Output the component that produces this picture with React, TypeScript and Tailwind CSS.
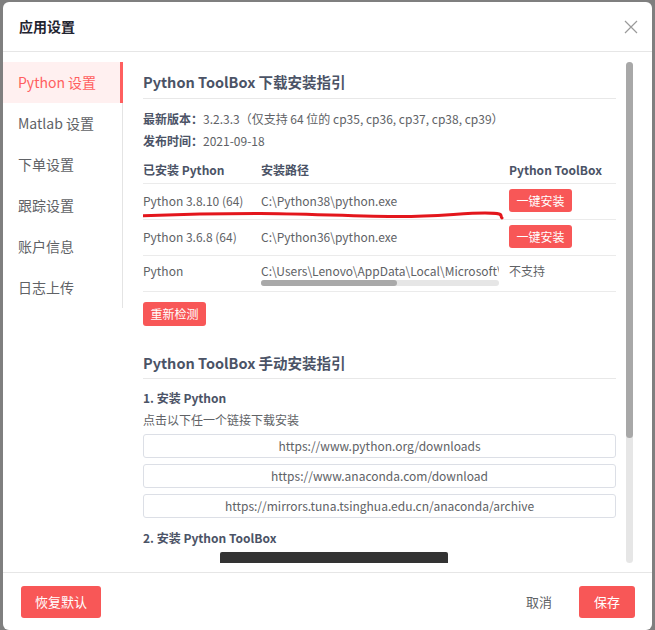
import React from 'react';

const menuItems = ['Python 设置', 'Matlab 设置', '下单设置', '跟踪设置', '账户信息', '日志上传'];

const links = [
  'https://www.python.org/downloads',
  'https://www.anaconda.com/download',
  'https://mirrors.tuna.tsinghua.edu.cn/anaconda/archive',
];

const RedButton: React.FC<{ children: React.ReactNode; className?: string }> = ({ children, className = '' }) => (
  <button className={`block rounded-[3px] bg-[#f85757] text-white ${className}`}>{children}</button>
);

const App: React.FC = () => {
  return (
    <div className="h-[630px] w-full overflow-hidden bg-[#7f7f7f] px-[3px] pt-[2px] font-['Noto_Sans_CJK_SC',sans-serif]">
      <div className="flex h-[628px] flex-col overflow-hidden rounded-[6px] bg-white">
        {/* header */}
        <div className="flex h-[50px] shrink-0 items-center justify-between border-b border-[#e6e6e6] pl-[16px] pr-[14px]">
          <span className="text-[14px] font-bold text-[#1f2430]">应用设置</span>
          <svg width="14" height="14" viewBox="0 0 14 14" stroke="#9a9a9a" strokeWidth="1.2" fill="none">
            <path d="M1 1l12 12M13 1L1 13" />
          </svg>
        </div>

        {/* body */}
        <div className="flex h-[520px] shrink-0 pt-[10px]">
          <div className="w-[120px] shrink-0">
            <div className="border-r border-[#e4e4e4]">
              {menuItems.map((item, i) => (
                <div
                  key={item}
                  className={`relative flex h-[41px] items-center pl-[15px] text-[14px] ${
                    i === 0 ? 'bg-[#fff0f0] text-[#ff5f5f]' : 'text-[#606266]'
                  }`}
                >
                  {item}
                  {i === 0 && <span className="absolute right-[-1px] top-0 h-full w-[3px] bg-[#ff5f5f]" />}
                </div>
              ))}
            </div>
          </div>

          <div className="flex h-[501px] pl-[20px]">
            <div className="h-[501px] w-[473px] overflow-hidden text-[12px] text-[#606266]">
              {/* download guide */}
              <div className="border-b border-[#e8e8e8] pb-[4px] pt-[8px] text-[14.5px] font-bold leading-[24px] text-[#4b5366]">
                Python ToolBox 下载安装指引
              </div>
              <div className="mt-[9px] leading-[22px]">
                <span className="font-bold text-[#4b5366]">最新版本：</span>3.2.3.3（仅支持 64 位的 cp35, cp36, cp37, cp38, cp39）
              </div>
              <div className="leading-[22px]">
                <span className="font-bold text-[#4b5366]">发布时间：</span>2021-09-18
              </div>

              <div className="relative mt-[5px]">
                <div className="flex h-[27px] items-center border-b border-[#ebebeb] font-bold text-[#4b5366]">
                  <div className="w-[118px]">已安装 Python</div>
                  <div className="w-[248px]">安装路径</div>
                  <div>Python ToolBox</div>
                </div>
                <div className="flex h-[36px] items-center border-b border-[#ebebeb] pb-[2px]">
                  <div className="w-[118px]">Python 3.8.10 (64)</div>
                  <div className="w-[248px]">C:\Python38\python.exe</div>
                  <RedButton className="h-[23px] w-[63px] text-[12px]">一键安装</RedButton>
                </div>
                <div className="flex h-[36px] items-center border-b border-[#ebebeb] pb-[2px]">
                  <div className="w-[118px]">Python 3.6.8 (64)</div>
                  <div className="w-[248px]">C:\Python36\python.exe</div>
                  <RedButton className="h-[23px] w-[63px] text-[12px]">一键安装</RedButton>
                </div>
                <div className="flex h-[36px] items-start border-b border-[#ebebeb] pt-[6px]">
                  <div className="w-[118px] leading-[18px]">Python</div>
                  <div className="w-[248px] overflow-hidden">
                    <div className="w-[238px] overflow-hidden whitespace-nowrap leading-[18px]">
                      C:\Users\Lenovo\AppData\Local\Microsoft\WindowsApps\python.exe
                    </div>
                    <div className="h-[6px] w-[238px] rounded-full bg-[#e6e6e6]">
                      <div className="h-[6px] w-[136px] rounded-full bg-[#a9a9a9]" />
                    </div>
                  </div>
                  <div className="leading-[18px]">不支持</div>
                </div>

                <svg className="pointer-events-none absolute left-[-10px] top-[52px]" width="380" height="14" viewBox="0 0 380 14" fill="none">
                  <path
                    d="M2 7 C40 5.5 90 4.5 127 4.5 S230 7.5 267 7.5 S330 4 352 4 S366 7 369 9"
                    stroke="#e3161c"
                    strokeWidth="3"
                    strokeLinecap="round"
                  />
                </svg>
              </div>

              <RedButton className="mt-[10px] h-[24px] w-[63px] text-[12px]">重新检测</RedButton>

              {/* manual guide */}
              <div className="mt-[25px] border-b border-[#e8e8e8] pb-[3px] text-[14.5px] font-bold leading-[24px] text-[#4b5366]">
                Python ToolBox 手动安装指引
              </div>
              <div className="mt-[8px] font-bold leading-[22px] text-[#4b5366]">1. 安装 Python</div>
              <div className="leading-[22px]">点击以下任一个链接下载安装</div>
              <div className="mt-[3px] flex flex-col gap-[6px]">
                {links.map((l) => (
                  <div key={l} className="flex h-[24px] items-center justify-center rounded-[3px] border border-[#dcdfe6]">
                    {l}
                  </div>
                ))}
              </div>
              <div className="mt-[9px] font-bold leading-[22px] text-[#4b5366]">2. 安装 Python ToolBox</div>
              <div className="ml-[77px] mt-[3px] h-[20px] w-[228px] rounded-[2px] bg-[#333333]" />
            </div>

            {/* scrollbar */}
            <div className="ml-[10px] flex h-[501px] w-[7px] flex-col rounded-full bg-[#e6e6e6]">
              <div className="h-[376px] w-[7px] rounded-full bg-[#a8a8a8]" />
            </div>
          </div>
        </div>

        {/* footer */}
        <div className="flex flex-1 items-center border-t border-[#e6e6e6] pl-[18px] pr-[17px]">
          <RedButton className="h-[32px] w-[80px] text-[13px]">恢复默认</RedButton>
          <div className="flex-1" />
          <span className="mr-[27px] text-[13px] text-[#606266]">取消</span>
          <RedButton className="h-[32px] w-[56px] text-[13px]">保存</RedButton>
        </div>
      </div>
    </div>
  );
};

export default App;
